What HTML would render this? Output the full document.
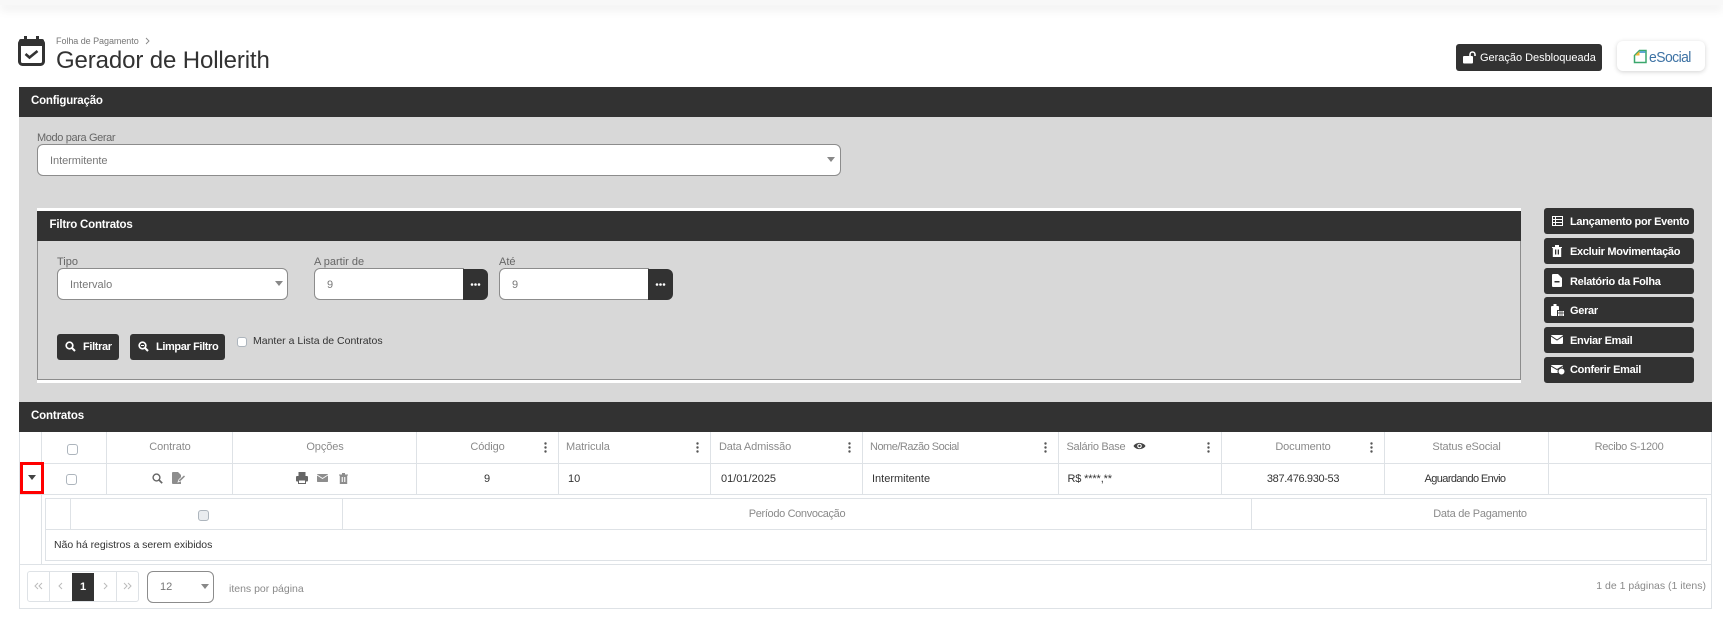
<!DOCTYPE html>
<html lang="pt-BR">
<head>
<meta charset="utf-8">
<title>Gerador de Hollerith</title>
<style>
html,body{margin:0;padding:0;width:1723px;height:628px;overflow:hidden;background:#fff}
body{position:relative;font-family:"Liberation Sans",Arial,sans-serif}
.b,.t,svg.i{position:absolute}
.t{white-space:nowrap;height:16px;line-height:16px;font-size:11px;color:#333}
.h{font-size:11px;color:#8a8a8a;letter-spacing:-.1px}
.c{transform:translateX(-50%)}
.w{color:#fff;font-weight:bold}
.lbl{color:#666;font-size:11px}
.dark{background:#323232}
.box{background:#fff;border:1px solid #8c8c8c;box-sizing:border-box;border-radius:6px}
.btn{background:#323232;border-radius:3px}
.ln{position:absolute;background:#dee2e6}
.cb{position:absolute;width:11px;height:11px;box-sizing:border-box;background:#fff;border:1px solid #adb5bd;border-radius:3px}
</style>
</head>
<body>
<div class="b" style="left:0;top:0;width:1723px;height:5px;background:#f8f8f8;box-shadow:0 4px 10px rgba(0,0,0,.1)"></div>

<svg class="i" style="left:18px;top:35px" width="28" height="32" viewBox="0 0 28 32"><rect x="1.500" y="5.500" width="24" height="24" rx="3" fill="#fff" stroke="#323232" stroke-width="3"/><rect x="1" y="4" width="25" height="7" rx="2" fill="#323232"/><rect x="6" y="1" width="3" height="6" fill="#323232"/><rect x="18" y="1" width="3" height="6" fill="#323232"/><path d="M7.500 19l4 3.500 8-6.500" fill="none" stroke="#323232" stroke-width="2.600"/></svg>
<div class="t" style="left:56px;top:33px;font-size:9px;color:#777;letter-spacing:-.05px">Folha de Pagamento</div>
<svg class="i" style="left:144px;top:37px" width="8" height="8" viewBox="0 0 8 8"><path d="M2 1l3 3-3 3" fill="none" stroke="#888" stroke-width=".9"/></svg>
<div class="t" style="left:56px;top:46px;height:30px;line-height:30px;font-size:24px;color:#323232;letter-spacing:-.12px">Gerador de Hollerith</div>

<div class="b btn" style="left:1456px;top:44px;width:146px;height:27px"></div>
<svg class="i" style="left:1463px;top:51px" width="14" height="13" viewBox="0 0 14 13"><rect x="0" y="5" width="10" height="7.500" rx="1" fill="#fff"/><path d="M7 5V3.500a2.500 2.500 0 0 1 5 0V5" fill="none" stroke="#fff" stroke-width="1.600"/></svg>
<div class="t" style="left:1480px;top:50px;color:#fff;font-size:11px;letter-spacing:-.02px">Geração Desbloqueada</div>

<div class="b" style="left:1617px;top:41px;width:88px;height:30px;background:#fff;border-radius:6px;box-shadow:0 1px 5px rgba(0,0,0,.18)"></div>
<svg class="i" style="left:1633px;top:49px" width="15" height="15" viewBox="0 0 15 15"><path d="M1.500 13.500V6.500L6.500 1.500H13V13.500Z" fill="#fff" stroke="#3aa76d" stroke-width="1.500"/><path d="M2 6.500L6.500 2V6.500Z" fill="#f2b632"/><path d="M6.500 2H12.500V4H6.500Z" fill="#5fa8d3"/></svg>
<div class="t" style="left:1649px;top:49px;height:18px;line-height:18px;font-size:15px;color:#3d72a4;letter-spacing:-.6px;transform:scaleX(.93);transform-origin:0 50%">eSocial</div>

<!-- Configuração -->
<div class="b dark" style="left:19px;top:87px;width:1693px;height:30px"></div>
<div class="t w" style="left:31px;top:93px;font-size:11.500px;letter-spacing:-.2px">Configuração</div>
<div class="b" style="left:19px;top:117px;width:1693px;height:285px;background:#d8d8d8"></div>
<div class="t lbl" style="left:37px;top:130px;letter-spacing:-.37px">Modo para Gerar</div>
<div class="b box" style="left:37px;top:144px;width:804px;height:32px"></div>
<div class="t" style="left:50px;top:153px;color:#777;font-size:11px;letter-spacing:-.05px">Intermitente</div>
<svg class="i" style="left:827px;top:157px" width="9" height="6"><path d="M0 0h8L4 5z" fill="#888"/></svg>

<!-- Filtro -->
<div class="b" style="left:37px;top:208px;width:1484px;height:175px;background:#fff"></div>
<div class="b dark" style="left:37px;top:211px;width:1484px;height:30px"></div>
<div class="b" style="left:37px;top:241px;width:1484px;height:139px;background:#d8d8d8;border:1px solid #8c8c8c;border-top:0;box-sizing:border-box"></div>
<div class="t w" style="left:49.500px;top:217px;font-size:11.500px;letter-spacing:-.2px">Filtro Contratos</div>

<div class="t lbl" style="left:57px;top:254px">Tipo</div>
<div class="b box" style="left:57px;top:268px;width:231px;height:32px"></div>
<div class="t" style="left:70px;top:277px;color:#777">Intervalo</div>
<svg class="i" style="left:275px;top:281px" width="9" height="6"><path d="M0 0h8L4 5z" fill="#888"/></svg>

<div class="t lbl" style="left:314px;top:254px">A partir de</div>
<div class="b box" style="left:314px;top:268px;width:150px;height:32px;border-radius:6px 0 0 6px"></div>
<div class="b btn" style="left:463px;top:269px;width:25px;height:31px;border-radius:0 6px 6px 0"></div>
<div class="t" style="left:327px;top:277px;color:#777">9</div>
<svg class="i" style="left:470px;top:282px" width="11" height="5"><circle cx="2" cy="2.500" r="1.300" fill="#fff"/><circle cx="5.500" cy="2.500" r="1.300" fill="#fff"/><circle cx="9" cy="2.500" r="1.300" fill="#fff"/></svg>

<div class="t lbl" style="left:499px;top:254px">Até</div>
<div class="b box" style="left:499px;top:268px;width:150px;height:32px;border-radius:6px 0 0 6px"></div>
<div class="b btn" style="left:648px;top:269px;width:25px;height:31px;border-radius:0 6px 6px 0"></div>
<div class="t" style="left:512px;top:277px;color:#777">9</div>
<svg class="i" style="left:655px;top:282px" width="11" height="5"><circle cx="2" cy="2.500" r="1.300" fill="#fff"/><circle cx="5.500" cy="2.500" r="1.300" fill="#fff"/><circle cx="9" cy="2.500" r="1.300" fill="#fff"/></svg>

<div class="b btn" style="left:57px;top:334px;width:62px;height:26px"></div>
<svg class="i" style="left:65px;top:341px" width="11" height="11" viewBox="0 0 11 11"><circle cx="4.500" cy="4.500" r="3.300" fill="none" stroke="#fff" stroke-width="1.700"/><path d="M7 7l3 3" stroke="#fff" stroke-width="2"/></svg>
<div class="t w" style="left:83px;top:339px;font-size:11px;letter-spacing:-.35px">Filtrar</div>
<div class="b btn" style="left:130px;top:334px;width:95px;height:26px"></div>
<svg class="i" style="left:138px;top:341px" width="11" height="11" viewBox="0 0 11 11"><circle cx="4.500" cy="4.500" r="3.300" fill="none" stroke="#fff" stroke-width="1.700"/><path d="M7 7l3 3" stroke="#fff" stroke-width="2"/><path d="M3 4.500h3" stroke="#fff" stroke-width="1"/></svg>
<div class="t w" style="left:156px;top:339px;font-size:11px;letter-spacing:-.38px">Limpar Filtro</div>
<div class="cb" style="left:237px;top:337px;width:10px;height:10px"></div>
<div class="t" style="left:253px;top:333px;font-size:10.500px;color:#333">Manter a Lista de Contratos</div>

<!-- Side buttons -->
<div class="b btn" style="left:1544px;top:208px;width:150px;height:26px"></div>
<div class="b btn" style="left:1544px;top:238px;width:150px;height:26px"></div>
<div class="b btn" style="left:1544px;top:268px;width:150px;height:26px"></div>
<div class="b btn" style="left:1544px;top:297px;width:150px;height:26px"></div>
<div class="b btn" style="left:1544px;top:327px;width:150px;height:26px"></div>
<div class="b btn" style="left:1544px;top:357px;width:150px;height:26px"></div>
<div class="t w" style="left:1570px;top:214px;font-size:11px;letter-spacing:-.3px">Lançamento por Evento</div>
<div class="t w" style="left:1570px;top:244px;font-size:11px;letter-spacing:-.3px">Excluir Movimentação</div>
<div class="t w" style="left:1570px;top:274px;font-size:11px;letter-spacing:-.3px">Relatório da Folha</div>
<div class="t w" style="left:1570px;top:303px;font-size:11px;letter-spacing:-.3px">Gerar</div>
<div class="t w" style="left:1570px;top:333px;font-size:11px;letter-spacing:-.3px">Enviar Email</div>
<div class="t w" style="left:1570px;top:362px;font-size:11px;letter-spacing:-.3px">Conferir Email</div>
<svg class="i" style="left:1552px;top:216px" width="11" height="10" viewBox="0 0 11 10"><rect x=".5" y=".5" width="10" height="9" fill="none" stroke="#fff"/><path d="M.5 3.500h10M.5 6.500h10M3.500 .5v9" stroke="#fff" stroke-width="1"/></svg>
<svg class="i" style="left:1552px;top:245px" width="10" height="12" viewBox="0 0 10 12"><path d="M0 2h10v1H9.200v9H.8V3H0z" fill="#fff"/><rect x="3" y="0" width="4" height="2" fill="#fff"/><rect x="3" y="4.500" width="1.300" height="5" fill="#323232"/><rect x="5.700" y="4.500" width="1.300" height="5" fill="#323232"/></svg>
<svg class="i" style="left:1552px;top:274px" width="10" height="13" viewBox="0 0 10 13"><path d="M0 1a1 1 0 0 1 1-1h5l4 4v8a1 1 0 0 1-1 1H1a1 1 0 0 1-1-1z" fill="#fff"/><rect x="2.500" y="7" width="5" height="1.500" fill="#323232"/></svg>
<svg class="i" style="left:1551px;top:304px" width="13" height="12" viewBox="0 0 13 12"><rect x="0" y="2" width="8" height="10" rx="1" fill="#fff"/><rect x="2.500" y="0" width="3" height="3" fill="#fff"/><rect x="6" y="6" width="7" height="6" fill="#323232"/><path d="M7 7h6v5H7z" fill="#fff"/><path d="M7 9h6M9 7v5M11 7v5" stroke="#323232" stroke-width=".7"/></svg>
<svg class="i" style="left:1551px;top:335px" width="12" height="9" viewBox="0 0 12 9"><rect width="12" height="9" rx="1" fill="#fff"/><path d="M0 1l6 4 6-4" fill="none" stroke="#323232" stroke-width="1"/></svg>
<svg class="i" style="left:1551px;top:365px" width="14" height="10" viewBox="0 0 14 10"><rect width="12" height="8" rx="1" fill="#fff"/><path d="M0 1l6 3.500L12 1" fill="none" stroke="#323232" stroke-width="1"/><circle cx="10.500" cy="6.500" r="3.500" fill="#fff" stroke="#323232"/></svg>

<!-- Contratos -->
<div class="b dark" style="left:19px;top:402px;width:1693px;height:30px"></div>
<div class="t w" style="left:31px;top:408px;font-size:11.500px;letter-spacing:-.15px">Contratos</div>

<!-- table lines -->
<div class="ln" style="left:19px;top:432px;width:1px;height:177px"></div>
<div class="ln" style="left:1711px;top:432px;width:1px;height:177px"></div>
<div class="ln" style="left:19px;top:463px;width:1693px;height:1px"></div>
<div class="ln" style="left:19px;top:494px;width:1693px;height:1px"></div>
<div class="ln" style="left:19px;top:564px;width:1693px;height:1px"></div>
<div class="ln" style="left:19px;top:608px;width:1693px;height:1px"></div>
<div class="ln" style="left:41px;top:432px;width:1px;height:132px"></div>
<div class="ln" style="left:106px;top:432px;width:1px;height:62px"></div>
<div class="ln" style="left:232px;top:432px;width:1px;height:62px"></div>
<div class="ln" style="left:416px;top:432px;width:1px;height:62px"></div>
<div class="ln" style="left:558px;top:432px;width:1px;height:62px"></div>
<div class="ln" style="left:710px;top:432px;width:1px;height:62px"></div>
<div class="ln" style="left:862px;top:432px;width:1px;height:62px"></div>
<div class="ln" style="left:1058px;top:432px;width:1px;height:62px"></div>
<div class="ln" style="left:1221px;top:432px;width:1px;height:62px"></div>
<div class="ln" style="left:1384px;top:432px;width:1px;height:62px"></div>
<div class="ln" style="left:1548px;top:432px;width:1px;height:62px"></div>

<!-- header -->
<div class="cb" style="left:67px;top:444px"></div>
<div class="t h c" style="left:170px;top:439px">Contrato</div>
<div class="t h c" style="left:325px;top:439px">Opções</div>
<div class="t h c" style="left:487.500px;top:439px">Código</div>
<div class="t h" style="left:566px;top:439px">Matricula</div>
<div class="t h" style="left:719px;top:439px;letter-spacing:-.15px">Data Admissão</div>
<div class="t h" style="left:870px;top:439px;letter-spacing:-.5px">Nome/Razão Social</div>
<div class="t h" style="left:1066.500px;top:439px;letter-spacing:-.3px">Salário Base</div>
<div class="t h c" style="left:1303px;top:439px">Documento</div>
<div class="t h c" style="left:1466.500px;top:439px;letter-spacing:-.15px">Status eSocial</div>
<div class="t h c" style="left:1629px;top:439px;letter-spacing:-.3px">Recibo S-1200</div>
<svg class="i" style="left:1133px;top:441px" width="13" height="10" viewBox="0 0 13 10"><path d="M.5 5C3 .8 10 .8 12.500 5 10 9.200 3 9.200.5 5z" fill="#444"/><circle cx="6.500" cy="5" r="2.300" fill="#fff"/><circle cx="6.500" cy="5" r="1.200" fill="#444"/></svg>
<svg class="i" style="left:544px;top:442px" width="3" height="11"><circle cx="1.500" cy="1.500" r="1.200" fill="#555"/><circle cx="1.500" cy="5.500" r="1.200" fill="#555"/><circle cx="1.500" cy="9.500" r="1.200" fill="#555"/></svg>
<svg class="i" style="left:696px;top:442px" width="3" height="11"><circle cx="1.500" cy="1.500" r="1.200" fill="#555"/><circle cx="1.500" cy="5.500" r="1.200" fill="#555"/><circle cx="1.500" cy="9.500" r="1.200" fill="#555"/></svg>
<svg class="i" style="left:848px;top:442px" width="3" height="11"><circle cx="1.500" cy="1.500" r="1.200" fill="#555"/><circle cx="1.500" cy="5.500" r="1.200" fill="#555"/><circle cx="1.500" cy="9.500" r="1.200" fill="#555"/></svg>
<svg class="i" style="left:1044px;top:442px" width="3" height="11"><circle cx="1.500" cy="1.500" r="1.200" fill="#555"/><circle cx="1.500" cy="5.500" r="1.200" fill="#555"/><circle cx="1.500" cy="9.500" r="1.200" fill="#555"/></svg>
<svg class="i" style="left:1207px;top:442px" width="3" height="11"><circle cx="1.500" cy="1.500" r="1.200" fill="#555"/><circle cx="1.500" cy="5.500" r="1.200" fill="#555"/><circle cx="1.500" cy="9.500" r="1.200" fill="#555"/></svg>
<svg class="i" style="left:1370px;top:442px" width="3" height="11"><circle cx="1.500" cy="1.500" r="1.200" fill="#555"/><circle cx="1.500" cy="5.500" r="1.200" fill="#555"/><circle cx="1.500" cy="9.500" r="1.200" fill="#555"/></svg>

<!-- row -->
<div class="b" style="left:20px;top:462px;width:24px;height:32px;border:3px solid #f00;box-sizing:border-box;background:#fff"></div>
<svg class="i" style="left:28px;top:475px" width="8" height="5"><path d="M0 0h8L4 5z" fill="#444"/></svg>
<div class="cb" style="left:66px;top:474px"></div>
<svg class="i" style="left:152px;top:473px" width="11" height="11" viewBox="0 0 11 11"><circle cx="4.500" cy="4.500" r="3.400" fill="none" stroke="#666" stroke-width="1.400"/><path d="M7 7l3.200 3.200" stroke="#666" stroke-width="1.700"/></svg>
<svg class="i" style="left:172px;top:472px" width="14" height="12" viewBox="0 0 14 12"><path d="M0 1a1 1 0 0 1 1-1h5l3 3v9H1a1 1 0 0 1-1-1z" fill="#8d8d8d"/><path d="M6 10l1-2.500L12 3l1.500 1.500-4.500 4.500z" fill="#8d8d8d" stroke="#fff" stroke-width=".7"/></svg>
<svg class="i" style="left:296px;top:472px" width="12" height="12" viewBox="0 0 12 12"><rect x="2.500" y="0" width="7" height="4" fill="#666"/><rect x="0" y="4" width="12" height="5.500" rx="1" fill="#666"/><rect x="2.500" y="8" width="7" height="3.500" fill="#fff" stroke="#666" stroke-width="1"/></svg>
<svg class="i" style="left:317px;top:474px" width="11" height="8" viewBox="0 0 11 8"><rect width="11" height="8" rx=".8" fill="#8d8d8d"/><path d="M0 1l5.500 3.500L11 1" fill="none" stroke="#fff" stroke-width=".9"/></svg>
<svg class="i" style="left:339px;top:473px" width="9" height="11" viewBox="0 0 9 11"><path d="M0 1.500h9v1H8.200v8.500H.8V2.500H0z" fill="#8d8d8d"/><rect x="3" y="0" width="3" height="1.500" fill="#8d8d8d"/><rect x="2.700" y="4" width="1.100" height="5" fill="#fff"/><rect x="5.200" y="4" width="1.100" height="5" fill="#fff"/></svg>
<div class="t c" style="left:487px;top:471px;color:#333">9</div>
<div class="t" style="left:568px;top:471px;color:#333">10</div>
<div class="t" style="left:721px;top:471px;color:#333">01/01/2025</div>
<div class="t" style="left:872px;top:471px;color:#333">Intermitente</div>
<div class="t" style="left:1067.500px;top:471px;color:#333;letter-spacing:-.15px">R$ ****,**</div>
<div class="t c" style="left:1303px;top:471px;color:#333;letter-spacing:-.35px">387.476.930-53</div>
<div class="t c" style="left:1465px;top:471px;color:#333;letter-spacing:-.6px">Aguardando Envio</div>

<!-- sub-table -->
<div class="b" style="left:45px;top:498px;width:1662px;height:63px;border:1px solid #dee2e6;box-sizing:border-box"></div>
<div class="ln" style="left:45px;top:529px;width:1662px;height:1px"></div>
<div class="ln" style="left:70px;top:498px;width:1px;height:32px"></div>
<div class="ln" style="left:342px;top:498px;width:1px;height:32px"></div>
<div class="ln" style="left:1251px;top:498px;width:1px;height:32px"></div>
<div class="cb" style="left:198px;top:510px;background:#e9ecef"></div>
<div class="t h c" style="left:797px;top:506px;letter-spacing:-.35px">Período Convocação</div>
<div class="t h c" style="left:1480px;top:506px;letter-spacing:-.25px">Data de Pagamento</div>
<div class="t" style="left:54px;top:537px;color:#333;font-size:10.500px;letter-spacing:-.03px">Não há registros a serem exibidos</div>

<!-- pager -->
<div class="b" style="left:27px;top:571px;width:112px;height:31px;border:1px solid #dee2e6;border-radius:3px;box-sizing:border-box"></div>
<div class="ln" style="left:49px;top:572px;width:1px;height:29px"></div>
<div class="ln" style="left:116px;top:572px;width:1px;height:29px"></div>
<div class="b dark" style="left:72px;top:573px;width:22px;height:28px"></div>
<div class="t c w" style="left:83px;top:579px">1</div>
<svg class="i" style="left:34px;top:582px" width="9" height="8" viewBox="0 0 9 8"><path d="M4 1L1 4l3 3M8 1L5 4l3 3" fill="none" stroke="#bbb"/></svg>
<svg class="i" style="left:58px;top:582px" width="5" height="8" viewBox="0 0 5 8"><path d="M4 1L1 4l3 3" fill="none" stroke="#bbb"/></svg>
<svg class="i" style="left:103px;top:582px" width="5" height="8" viewBox="0 0 5 8"><path d="M1 1l3 3-3 3" fill="none" stroke="#bbb"/></svg>
<svg class="i" style="left:123px;top:582px" width="9" height="8" viewBox="0 0 9 8"><path d="M1 1l3 3-3 3M5 1l3 3-3 3" fill="none" stroke="#bbb"/></svg>
<div class="b box" style="left:147px;top:571px;width:67px;height:32px"></div>
<div class="t" style="left:160px;top:579px;color:#777">12</div>
<svg class="i" style="left:201px;top:584px" width="9" height="6"><path d="M0 0h8L4 5z" fill="#888"/></svg>
<div class="t" style="left:229px;top:581px;color:#8a8a8a;font-size:10.500px">itens por página</div>
<div class="t" style="right:17px;top:578px;color:#8a8a8a;font-size:10.500px">1 de 1 páginas (1 itens)</div>
</body>
</html>
